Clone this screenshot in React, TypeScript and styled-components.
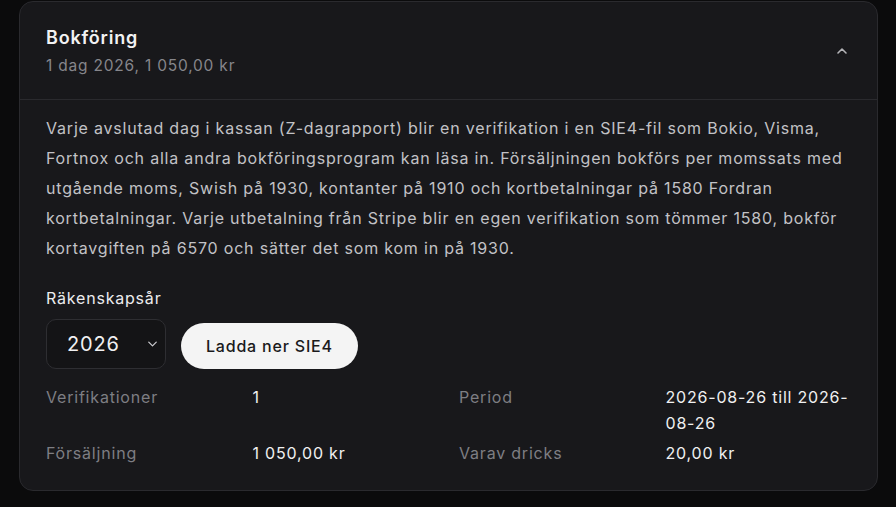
import React, { useState } from "react";
import styled, { createGlobalStyle } from "styled-components";

const GlobalStyle = createGlobalStyle`
  * { box-sizing: border-box; }
  body {
    margin: 0;
    background: #0b0b0c;
    font-family: Inter, "Noto Sans", "Liberation Sans", sans-serif;
    letter-spacing: 0.05em;
    -webkit-font-smoothing: antialiased;
  }
`;

const Page = styled.div`
  padding: 1px 18px 16px 19px;
  min-height: 507px;
`;

const Card = styled.section`
  background: #18181b;
  border: 1px solid #2a2a2e;
  border-radius: 14px;
  overflow: hidden;
`;

const Header = styled.div`
  display: flex;
  align-items: center;
  justify-content: space-between;
  padding: 22px 27px 21px 26px;
  border-bottom: 1px solid #2a2a2e;
`;

const HeaderText = styled.div`
  display: flex;
  flex-direction: column;
`;

const Title = styled.h2`
  margin: 0;
  font-size: 18px;
  line-height: 28px;
  font-weight: 600;
  color: #f2f2f3;
`;

const Subtitle = styled.div`
  margin-top: 2px;
  font-size: 15.5px;
  line-height: 24px;
  color: #86868b;
`;

const ToggleButton = styled.button`
  background: none;
  border: none;
  padding: 4px;
  margin-right: -4px;
  color: #b4b4b8;
  cursor: pointer;
  display: flex;
`;

const Body = styled.div`
  padding: 13px 27px 24px 26px;
`;

const Description = styled.p`
  margin: 0;
  font-size: 16px;
  line-height: 30px;
  color: #c2c2c6;
`;

const FieldLabel = styled.div`
  margin-top: 23px;
  font-size: 16px;
  line-height: 24px;
  color: #ececee;
`;

const Controls = styled.div`
  display: flex;
  align-items: flex-end;
  gap: 15px;
  margin-top: 9px;
`;

const SelectBox = styled.div`
  position: relative;
  width: 120px;
  height: 50px;
`;

const Select = styled.select`
  appearance: none;
  width: 100%;
  height: 100%;
  background: #141416;
  border: 1px solid #2e2e32;
  border-radius: 10px;
  color: #f0f0f1;
  font-family: inherit;
  letter-spacing: inherit;
  font-size: 20px;
  padding: 0 0 0 20px;
  outline: none;
`;

const SelectChevron = styled.span`
  position: absolute;
  right: 6px;
  top: 50%;
  transform: translateY(-50%);
  display: flex;
  color: #c8c8cc;
  pointer-events: none;
`;

const PrimaryButton = styled.button`
  height: 46px;
  padding: 0 25px;
  border: none;
  border-radius: 23px;
  background: #f4f4f4;
  color: #1a1a1c;
  font-family: inherit;
  letter-spacing: inherit;
  font-size: 16px;
  font-weight: 500;
  cursor: pointer;
`;

const Stats = styled.dl`
  display: grid;
  grid-template-columns: repeat(4, 1fr);
  column-gap: 22px;
  row-gap: 4px;
  margin: 15px 0 0;
`;

const StatLabel = styled.dt`
  font-size: 16px;
  line-height: 26px;
  color: #7e7e83;
`;

const StatValue = styled.dd`
  margin: 0;
  font-size: 16px;
  line-height: 26px;
  color: #f0f0f1;
`;

const ChevronUp = () => (
  <svg width="16" height="16" viewBox="0 0 24 24" fill="none" stroke="currentColor" strokeWidth="2.4" strokeLinecap="round" strokeLinejoin="round">
    <path d="m18 15-6-6-6 6" />
  </svg>
);

const ChevronDown = () => (
  <svg width="15" height="15" viewBox="0 0 24 24" fill="none" stroke="currentColor" strokeWidth="2.1" strokeLinecap="round" strokeLinejoin="round">
    <path d="m6 9 6 6 6-6" />
  </svg>
);

// zero-width space lets the period wrap after the hyphen, as in the design
const stats = [
  ["Verifikationer", "1", "Period", "2026-08-26 till 2026-\u200B08-26"],
  ["Försäljning", "1 050,00 kr", "Varav dricks", "20,00 kr"],
];

const App: React.FC = () => {
  const [year, setYear] = useState("2026");

  return (
    <>
      <GlobalStyle />
      <Page>
        <Card>
          <Header>
            <HeaderText>
              <Title>Bokföring</Title>
              <Subtitle>1 dag 2026, 1 050,00 kr</Subtitle>
            </HeaderText>
            <ToggleButton aria-label="Fäll ihop">
              <ChevronUp />
            </ToggleButton>
          </Header>
          <Body>
            <Description>
              Varje avslutad dag i kassan (Z-dagrapport) blir en verifikation i en SIE4-fil som Bokio, Visma,
              Fortnox och alla andra bokföringsprogram kan läsa in. Försäljningen bokförs per momssats med
              utgående moms, Swish på 1930, kontanter på 1910 och kortbetalningar på 1580 Fordran
              kortbetalningar. Varje utbetalning från Stripe blir en egen verifikation som tömmer 1580, bokför
              kortavgiften på 6570 och sätter det som kom in på 1930.
            </Description>
            <FieldLabel>Räkenskapsår</FieldLabel>
            <Controls>
              <SelectBox>
                <Select value={year} onChange={(e) => setYear(e.target.value)}>
                  <option value="2026">2026</option>
                  <option value="2025">2025</option>
                </Select>
                <SelectChevron>
                  <ChevronDown />
                </SelectChevron>
              </SelectBox>
              <PrimaryButton>Ladda ner SIE4</PrimaryButton>
            </Controls>
            <Stats>
              {stats.map((row) =>
                [0, 2].map((i) => (
                  <React.Fragment key={row[i]}>
                    <StatLabel>{row[i]}</StatLabel>
                    <StatValue>{row[i + 1]}</StatValue>
                  </React.Fragment>
                ))
              )}
            </Stats>
          </Body>
        </Card>
      </Page>
    </>
  );
};

export default App;
